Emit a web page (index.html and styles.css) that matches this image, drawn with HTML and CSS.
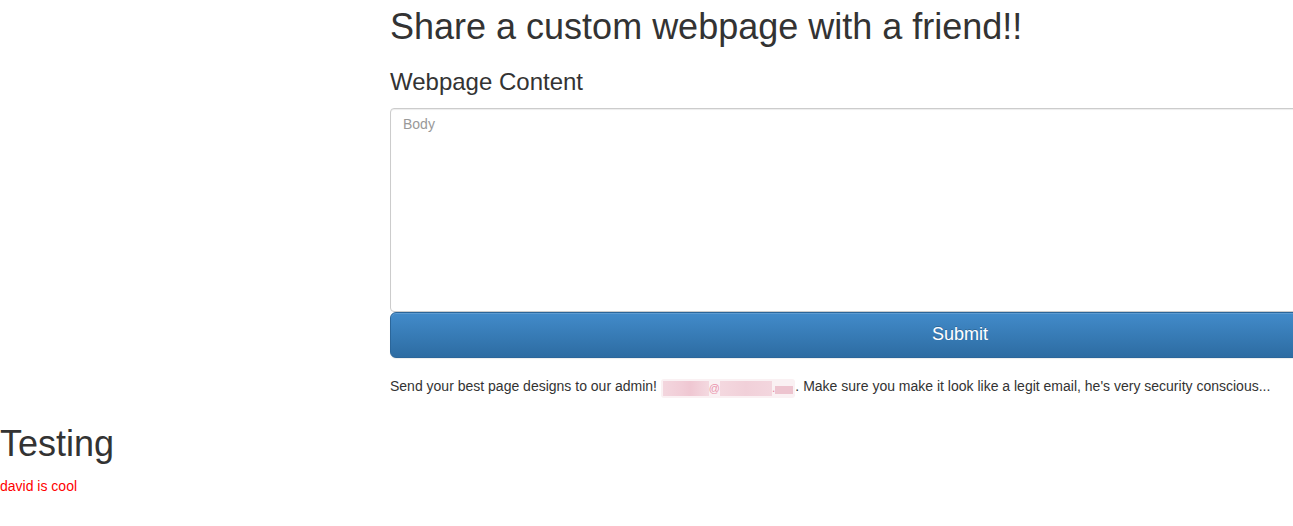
FILE: index.html
```html
<!DOCTYPE html>
<html>
<head>
<meta charset="utf-8">
<title>Share</title>
<link rel="stylesheet" href="styles.css">
</head>
<body>
<div class="container">
  <h1 class="title">Share a custom webpage with a friend!!</h1>
  <form class="form">
    <h3 class="label">Webpage Content</h3>
    <textarea class="body-input" placeholder="Body"></textarea>
    <button type="button" class="btn-submit">Submit</button>
  </form>
  <p class="note">Send your best page designs to our admin! <span class="redact"><span class="r1"></span><span class="at">@</span><span class="r2"></span><span class="dot">.</span><span class="r3"></span></span>. Make sure you make it look like a legit email, he's very security conscious...</p>
</div>
<h1 class="testing">Testing</h1>
<p class="cool">david is cool</p>
</body>
</html>
```
FILE: styles.css
```css
html {
  overflow-x: hidden;
}
body {
  margin: 0;
  font-family: "Liberation Sans", Arial, Helvetica, sans-serif;
  font-size: 14px;
  line-height: 1.42857;
  color: #333;
  background: #fff;
}
.container {
  width: 1140px;
  margin-left: 390px;
}
.title {
  margin: 7px 0 0;
  font-size: 36px;
  font-weight: 400;
  line-height: 1.1;
}
.form {
  margin: 0;
}
.label {
  margin: 22px 0 13px;
  font-size: 24px;
  font-weight: 400;
  line-height: 1.1;
}
.body-input {
  display: block;
  box-sizing: border-box;
  width: 100%;
  height: 204px;
  margin: 0;
  padding: 6px 12px;
  font-family: inherit;
  font-size: 14px;
  line-height: 1.42857;
  color: #555;
  background: #fff;
  border: 1px solid #ccc;
  border-radius: 4px;
  box-shadow: inset 0 1px 1px rgba(0,0,0,.075);
  resize: none;
}
.body-input::placeholder {
  color: #999;
}
.btn-submit {
  display: block;
  box-sizing: border-box;
  width: 100%;
  height: 46px;
  padding: 10px 16px;
  font-family: inherit;
  font-size: 18px;
  line-height: 1.3333;
  color: #fff;
  background-image: linear-gradient(to bottom, #428bca 0, #2d6ca2 100%);
  border: 1px solid #2b669a;
  border-radius: 6px;
  box-shadow: inset 0 1px 0 rgba(255,255,255,.15), 0 1px 1px rgba(0,0,0,.075);
  text-shadow: 0 -1px 0 rgba(0,0,0,.2);
  cursor: pointer;
}
.note {
  margin: 19px 0 0;
}
.redact {
  display: inline-flex;
  align-items: center;
  height: 19px;
  vertical-align: -5px;
  padding: 0 2px;
  background: #faf1f3;
  border-radius: 3px;
  color: #e0557e;
}
.r1 {
  width: 46px;
  height: 15px;
  background: linear-gradient(to right, #f3d6de 0, #f1cdd7 40%, #efc7d2 60%, #f4d9e0 100%);
}
.at {
  font-size: 11px;
  line-height: 1;
  opacity: .6;
}
.r2 {
  width: 52px;
  height: 15px;
  background: linear-gradient(to right, #f4d8df 0, #f1d0d9 50%, #f3d6de 100%);
}
.dot {
  font-size: 12px;
  line-height: 1;
  opacity: .7;
}
.r3 {
  width: 18px;
  height: 8px;
  margin-top: 3px;
  background: #edc4cf;
}
.testing {
  margin: 26px 0 13px;
  font-size: 36px;
  font-weight: 400;
  line-height: 1.1;
}
.cool {
  margin: 0;
  color: red;
}
```
